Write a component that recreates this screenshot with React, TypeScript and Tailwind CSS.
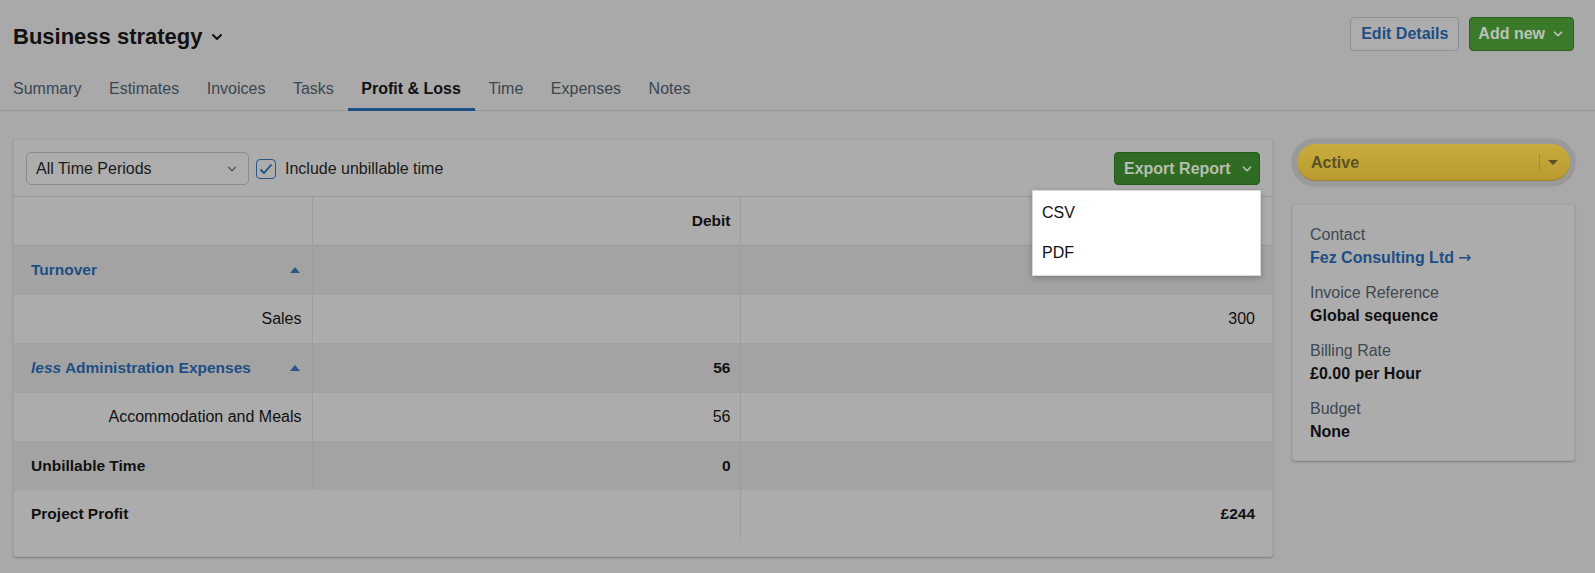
import { ChevronDown } from "lucide-react";

const tabs = ["Summary", "Estimates", "Invoices", "Tasks", "Profit & Loss", "Time", "Expenses", "Notes"];

function Caret() {
  return (
    <svg width="10" height="6" viewBox="0 0 10 6" className="shrink-0">
      <path d="M0 6 L5 0 L10 6 Z" fill="#2a5788" />
    </svg>
  );
}

function Info({ label, value, link }: { label: string; value: string; link?: boolean }) {
  return (
    <div className="mb-[12px] last:mb-0">
      <div className="text-[16px] leading-[23px] text-[#3e4851]">{label}</div>
      <div className={"text-[16px] leading-[23px] font-bold " + (link ? "text-[#1d4e84]" : "text-[#101010]")}>
        {value}
        {link && <span className="ml-[4px] font-['DejaVu_Sans',sans-serif] font-normal">→</span>}
      </div>
    </div>
  );
}

export default function App() {
  return (
    <div className="min-h-screen w-full bg-[#a9a9a9] font-['Liberation_Sans',Arial,sans-serif] text-[#111]">
      {/* header */}
      <div className="flex items-start justify-between pl-[13px] pr-[21px] pt-[17px]">
        <h1 className="mt-[7px] flex items-center gap-[6px] text-[22px] font-bold leading-[26px] text-[#111]">
          Business strategy
          <ChevronDown className="h-[16px] w-[16px]" strokeWidth={3} />
        </h1>
        <div className="flex gap-[10px]">
          <button className="h-[34px] whitespace-nowrap rounded-[4px] border border-[#8b9196] bg-[#adadad] px-[10px] text-[16px] font-bold text-[#1d4e84]">
            Edit Details
          </button>
          <button className="flex h-[34px] items-center gap-[6px] whitespace-nowrap rounded-[4px] border border-[#2c5f1f] bg-[#3b7a2b] px-[8px] text-[16px] font-bold text-[#bcc3b8]">
            Add new
            <ChevronDown className="h-[14px] w-[14px]" strokeWidth={3} />
          </button>
        </div>
      </div>

      {/* tabs */}
      <div className="mt-[24px] flex border-b border-[#989898] pl-[13px]">
        {tabs.map((t, i) => (
          <div
            key={t}
            className={
              "-mb-px border-b-[3px] pb-[7px] pt-[2px] text-[16px] leading-[24px] " +
              (i === 0 ? "pl-0 pr-[13.75px] " : "px-[13.75px] ") +
              (t === "Profit & Loss" ? "border-[#1c4f86] font-bold text-[#111]" : "border-transparent text-[#3b4650]")
            }
          >
            {t}
          </div>
        ))}
      </div>

      {/* main */}
      <div className="mt-[28px] flex items-start gap-[19px] px-[13px]">
        <div className="w-[1260px] rounded-[3px] border border-[#a3a3a3] bg-[#acacac] shadow-[0_1px_2px_rgba(0,0,0,0.25)]">
          {/* toolbar */}
          <div className="flex items-center justify-between px-[12px] pb-[11px] pt-[12px]">
            <div className="flex items-center">
              <div className="flex h-[33px] w-[223px] items-center justify-between rounded-[5px] border border-[#8c8c8c] bg-[#adadad] pl-[9px] pr-[9px] text-[16px] text-[#1a1a1a]">
                All Time Periods
                <ChevronDown className="h-[14px] w-[14px] text-[#5a5a5a]" strokeWidth={2.5} />
              </div>
              <div className="ml-[7px] flex h-[20px] w-[20px] items-center justify-center rounded-[4px] border border-[#2a5788] bg-[#adadad]">
                <svg width="14" height="12" viewBox="0 0 14 12">
                  <path d="M1.5 6.5 L5 10 L12.5 1.5" fill="none" stroke="#1d4e84" strokeWidth="1.8" />
                </svg>
              </div>
              <span className="ml-[9px] text-[16px] text-[#1a1a1a]">Include unbillable time</span>
            </div>
            <div className="relative">
              <button className="flex h-[33px] w-[146px] items-center gap-[9px] whitespace-nowrap rounded-[4px] border border-[#275a1b] bg-[#2f6b23] pl-[9px] text-[16px] font-bold text-[#b6bfb2]">
                Export Report
                <ChevronDown className="h-[14px] w-[14px]" strokeWidth={3} />
              </button>
              <div className="absolute right-[-1px] top-full z-10 mt-[5px] w-[229px] border border-[#d8d8d8] bg-white py-[2px] shadow-[0_2px_6px_rgba(0,0,0,0.25)]">
                <div className="flex h-[40px] items-center px-[9px] text-[16px] text-[#111]">CSV</div>
                <div className="flex h-[40px] items-center px-[9px] text-[16px] text-[#111]">PDF</div>
              </div>
            </div>
          </div>

          {/* table */}
          <table className="w-full border-collapse text-[16px]">
            <colgroup>
              <col className="w-[298px]" />
              <col className="w-[428px]" />
              <col />
            </colgroup>
            <thead>
              <tr className="h-[49px] border-t border-[#989898] bg-[#acacac] text-[15.5px]">
                <th className="border-r border-[#9e9e9e]"></th>
                <th className="border-r border-[#9e9e9e] pr-[9px] text-right font-bold">Debit</th>
                <th className="pr-[17px] text-right font-bold">Credit</th>
              </tr>
            </thead>
            <tbody>
              <tr className="h-[49px] border-t border-[#989898] bg-[#a3a3a3]">
                <td className="border-r border-[#9e9e9e] pl-[17px] pr-[12px]">
                  <div className="flex items-center justify-between text-[15.5px] font-bold text-[#1d4e84]">
                    Turnover
                    <Caret />
                  </div>
                </td>
                <td className="border-r border-[#9e9e9e]"></td>
                <td className="pr-[17px] text-right text-[15.5px] font-bold">300</td>
              </tr>
              <tr className="h-[49px] border-t border-[#a1a1a1] bg-[#acacac]">
                <td className="border-r border-[#9e9e9e] pr-[10px] text-right">Sales</td>
                <td className="border-r border-[#9e9e9e]"></td>
                <td className="pr-[17px] text-right">300</td>
              </tr>
              <tr className="h-[49px] border-t border-[#a0a0a0] bg-[#a3a3a3]">
                <td className="border-r border-[#9e9e9e] pl-[17px] pr-[12px]">
                  <div className="flex items-center justify-between text-[15.5px] font-bold text-[#1d4e84]">
                    <span>
                      <i>less</i> Administration Expenses
                    </span>
                    <Caret />
                  </div>
                </td>
                <td className="border-r border-[#9e9e9e] pr-[9px] text-right text-[15.5px] font-bold">56</td>
                <td></td>
              </tr>
              <tr className="h-[49px] border-t border-[#a0a0a0] bg-[#acacac]">
                <td className="border-r border-[#9e9e9e] pr-[10px] text-right">Accommodation and Meals</td>
                <td className="border-r border-[#9e9e9e] pr-[9px] text-right">56</td>
                <td></td>
              </tr>
              <tr className="h-[48px] border-t border-[#a0a0a0] bg-[#a3a3a3]">
                <td className="border-r border-[#9e9e9e] pl-[17px] text-[15.5px] font-bold">Unbillable Time</td>
                <td className="border-r border-[#9e9e9e] pr-[9px] text-right text-[15.5px] font-bold">0</td>
                <td></td>
              </tr>
              <tr className="h-[48px] border-t border-[#a0a0a0] bg-[#acacac]">
                <td colSpan={2} className="border-r border-[#9e9e9e] pl-[17px] text-[15.5px] font-bold">Project Profit</td>
                <td className="pr-[17px] text-right text-[15.5px] font-bold">£244</td>
              </tr>
            </tbody>
          </table>
          <div className="h-[18px]"></div>
        </div>

        {/* side panel */}
        <div className="w-[283px]">
          <div className="rounded-full bg-[#9a9a9a] p-[5px] shadow-[0_0_2px_rgba(0,0,0,0.2)]">
            <div className="flex h-[37px] items-center rounded-full bg-gradient-to-b from-[#c9ac3e] to-[#b89a30] pl-[14px] pr-[12px] shadow-[inset_0_-1px_0_rgba(0,0,0,0.15)]">
              <span className="flex-1 text-[16px] font-bold text-[#5a5124]">Active</span>
              <div className="mr-[8px] h-[18px] w-px bg-[#a58c34]"></div>
              <svg width="10" height="5" viewBox="0 0 10 5">
                <path d="M0 0 L10 0 L5 5 Z" fill="#5a5124" />
              </svg>
            </div>
          </div>
          <div className="mt-[18px] rounded-[3px] border border-[#a3a3a3] bg-[#acacac] px-[17px] pb-[17px] pt-[18px] shadow-[0_1px_2px_rgba(0,0,0,0.25)]">
            <Info label="Contact" value="Fez Consulting Ltd" link />
            <Info label="Invoice Reference" value="Global sequence" />
            <Info label="Billing Rate" value="£0.00 per Hour" />
            <Info label="Budget" value="None" />
          </div>
        </div>
      </div>
    </div>
  );
}
